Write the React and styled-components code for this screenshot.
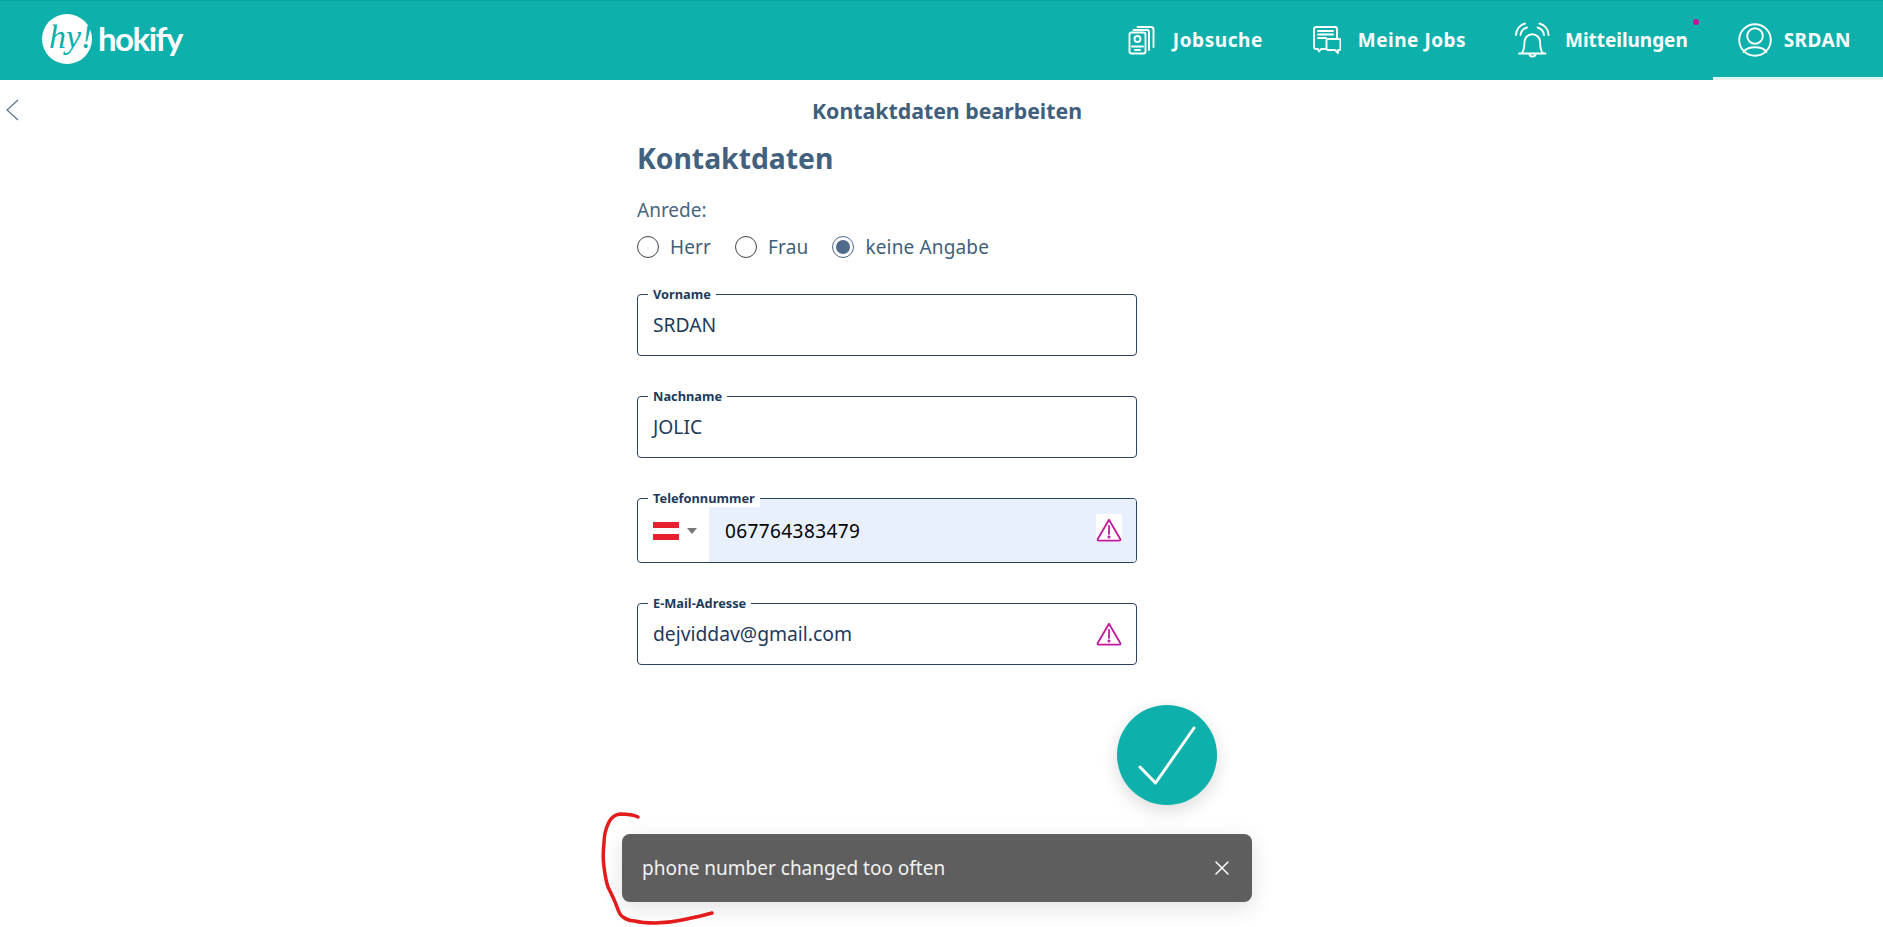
import React from "react";
import styled, { createGlobalStyle } from "styled-components";

const FONT = '"Noto Sans", "Open Sans", sans-serif';

const Global = createGlobalStyle`
  html, body { margin: 0; padding: 0; background: #fff; height: 100%; overflow: hidden; }
  body { font-family: ${FONT}; }
  * { box-sizing: border-box; }
`;

const Page = styled.div`
  position: relative;
  width: 1883px;
  height: 927px;
  overflow: hidden;
  background: #fff;
`;

const Header = styled.header`
  display: flex;
  align-items: stretch;
  justify-content: space-between;
  height: 80px;
  background: #0eb0ac;
  border-top: 1px solid #0ba5a1;
  padding-left: 42px;
`;

const Logo = styled.div`
  display: flex;
  align-items: center;
  gap: 6px;
  padding-bottom: 3px;
`;

const LogoWord = styled.span`
  font-family: Lato, sans-serif;
  font-size: 33px;
  font-weight: 700;
  color: #fff;
  letter-spacing: -1.5px;
  line-height: 1;
  padding-bottom: 2px;
`;

const Nav = styled.nav`
  display: flex;
  align-items: stretch;
`;

const NavItem = styled.a`
  display: flex;
  align-items: center;
  gap: ${(p) => p.$gap || 17}px;
  position: relative;
  padding: 1px ${(p) => (p.$active ? 32 : 25)}px 0 ${(p) => p.$lead ?? 25}px;
  font-size: 19px;
  font-weight: 700;
  color: #fff;
  letter-spacing: ${(p) => p.$track}px;
  white-space: nowrap;
  border-bottom: 3px solid ${(p) => (p.$active ? "#e4f5f4" : "transparent")};
`;

const NavIcon = styled.svg`
  display: block;
  flex: none;
  fill: none;
  stroke: #fff;
  stroke-width: 1.9;
  stroke-linecap: round;
  stroke-linejoin: round;
`;

const NotifyDot = styled.span`
  position: absolute;
  top: 18px;
  right: 14px;
  width: 6px;
  height: 6px;
  border-radius: 50%;
  background: #c2169a;
`;

const SubHeader = styled.div`
  position: relative;
  display: flex;
  justify-content: center;
  padding: 16px 0 0 11px;
  height: 59px;
`;

const BackIcon = styled.svg`
  position: absolute;
  left: 6px;
  top: 19px;
  fill: none;
  stroke: #50708c;
  stroke-width: 1.1;
`;

const SubTitle = styled.h1`
  margin: 0;
  font-size: 21.3px;
  line-height: 30px;
  font-weight: 700;
  color: #3f5f7c;
`;

const Form = styled.form`
  display: flex;
  flex-direction: column;
  width: 500px;
  margin-left: 637px;
`;

const Heading = styled.h2`
  margin: 0;
  font-size: 28.3px;
  line-height: 38px;
  font-weight: 700;
  color: #41617f;
`;

const GroupLabel = styled.div`
  margin-top: 21px;
  font-size: 19px;
  line-height: 24px;
  color: #48657f;
`;

const RadioRow = styled.div`
  display: flex;
  gap: 24px;
  margin-top: 13px;
`;

const RadioOption = styled.label`
  display: flex;
  align-items: center;
  gap: 11px;
  height: 24px;
  font-size: 19px;
  letter-spacing: 0.15px;
  color: #3f5f7c;
`;

const RadioCircle = styled.span`
  display: flex;
  align-items: center;
  justify-content: center;
  width: 22px;
  height: 22px;
  border-radius: 50%;
  border: 1px solid ${(p) => (p.$checked ? "#4f6a8a" : "#444")};
  &::after {
    content: "";
    display: ${(p) => (p.$checked ? "block" : "none")};
    width: 14px;
    height: 14px;
    border-radius: 50%;
    background: #4f6a8a;
  }
`;

const Fields = styled.div`
  display: flex;
  flex-direction: column;
  gap: 32px;
  margin-top: 27px;
`;

const Field = styled.fieldset`
  margin: 0;
  padding: 0 0 ${(p) => (p.$flush ? 0 : 6)}px;
  min-width: 0;
  border: 1px solid #2b4563;
  border-radius: 4px;
`;

const Legend = styled.legend`
  position: relative;
  z-index: 1;
  margin-left: 10px;
  padding: 0 5px;
  font-size: 12.8px;
  line-height: 17px;
  font-weight: 700;
  color: #1d3a5c;
  background: #fff;
`;

const FieldRow = styled.div`
  display: flex;
  align-items: center;
  height: 46px;
  padding: 0 14px 3px 15px;
`;

const Value = styled.div`
  flex: 1;
  font-size: 19.3px;
  color: #1d3a5c;
`;

const PhoneRow = styled.div`
  display: flex;
  align-items: stretch;
  height: 63px;
  margin-top: -8px;
`;

const CountryPicker = styled.div`
  display: flex;
  align-items: center;
  gap: 8px;
  width: 71px;
  padding: 1px 0 0 15px;
`;

const Caret = styled.span`
  width: 0;
  height: 0;
  border-left: 5px solid transparent;
  border-right: 5px solid transparent;
  border-top: 6px solid #777;
`;

const PhoneInput = styled.div`
  flex: 1;
  display: flex;
  align-items: center;
  padding: 1px 14px 0 16px;
  background: #e8f0fd;
  border-radius: 0 3px 3px 0;
`;

const PhoneValue = styled.div`
  flex: 1;
  font-size: 19px;
  letter-spacing: 0.4px;
  color: #000;
`;

const IconBox = styled.span`
  display: flex;
  padding-top: ${(p) => (p.$filled ? 4 : 0)}px;
  margin-top: ${(p) => (p.$filled ? -7 : 0)}px;
  background: ${(p) => (p.$filled ? "#fff" : "transparent")};
`;

const Fab = styled.button`
  position: absolute;
  left: 1117px;
  top: 705px;
  width: 100px;
  height: 100px;
  padding: 0;
  border: 0;
  border-radius: 50%;
  background: #0eb0ac;
  box-shadow: 0 6px 18px rgba(0, 0, 0, 0.14);
`;

const Toast = styled.div`
  position: absolute;
  left: 622px;
  top: 834px;
  width: 630px;
  height: 68px;
  display: flex;
  align-items: center;
  justify-content: space-between;
  padding: 0 22px 0 20px;
  background: #5e5e5e;
  border-radius: 8px;
  box-shadow: 0 6px 22px rgba(0, 0, 0, 0.12);
  color: #f2f2f2;
  font-size: 19px;
`;

const Scribble = styled.svg`
  position: absolute;
  left: 0;
  top: 0;
  pointer-events: none;
`;

const Warning = () => (
  <svg width="26" height="24" viewBox="0 0 26 24" fill="none" stroke="#c4189c" strokeWidth="1.8" strokeLinejoin="round" strokeLinecap="round">
    <path d="M13 1.8 L24.4 21.2 Q24.8 22.6 23.4 22.6 H2.6 Q1.2 22.6 1.6 21.2 Z" />
    <path d="M13 8 V16" />
    <circle cx="13" cy="19" r="0.6" fill="#c4189c" />
  </svg>
);

const Flag = () => (
  <svg width="26" height="18" viewBox="0 0 26 18">
    <rect width="26" height="18" fill="#fff" />
    <rect width="26" height="6" fill="#e9202f" />
    <rect y="12" width="26" height="6" fill="#e9202f" />
  </svg>
);

export default function App() {
  return (
    <Page>
      <Global />
      <Header>
        <Logo>
          <svg width="50" height="50" viewBox="0 0 50 50">
            <circle cx="25" cy="25" r="25" fill="#fff" />
            <text x="7" y="34" fontFamily='"Liberation Serif", serif' fontStyle="italic" fontSize="34" fill="#0eb0ac">hy!</text>
          </svg>
          <LogoWord>hokify</LogoWord>
        </Logo>
        <Nav>
          <NavItem $track={0.55}>
            <NavIcon width="28" height="30" viewBox="0 0 28 30">
              <rect x="1.5" y="7.5" width="16" height="21" rx="2" />
              <path d="M5.5 5 H19 a2 2 0 0 1 2 2 V25" />
              <path d="M9.5 2 H23 a2.5 2.5 0 0 1 2.5 2.5 V22" />
              <circle cx="9.5" cy="14" r="3" />
              <path d="M4 21.5 H15 M7 25 H12" />
            </NavIcon>
            Jobsuche
          </NavItem>
          <NavItem $track={0.5}>
            <NavIcon width="28" height="28" viewBox="0 0 28 28">
              <path d="M12 23 H8 L6 25.5 L5 23 H3 a2 2 0 0 1-2-2 V3 a2 2 0 0 1 2-2 H22 a2 2 0 0 1 2 2 V12" />
              <path d="M5 5 H20 M5 8.5 H20 M5 12 H13" />
              <path d="M15 13 H26 a1.5 1.5 0 0 1 1.5 1.5 V22.5 a1.5 1.5 0 0 1-1.5 1.5 H25 V27 L22 24 H15 a1.5 1.5 0 0 1-1.5-1.5 V14.5 A1.5 1.5 0 0 1 15 13 Z" />
            </NavIcon>
            Meine Jobs
          </NavItem>
          <NavItem $gap={15} $track={-0.05} $lead={23}>
            <NavIcon width="36" height="36" viewBox="0 0 36 36">
              <path d="M8 31 C10 28 10.5 25 10.5 20 a7.8 7.8 0 0 1 15.6 0 C26.1 25 26.6 28 28.6 31" />
              <path d="M5 31.5 H31.5" />
              <path d="M15.5 32 a3 2.5 0 0 0 6 0" />
              <path d="M2 13 A12 12 0 0 1 11 1.5 M6.5 13 A9 9 0 0 1 13 5.5" />
              <path d="M34.6 13 A12 12 0 0 0 25.6 1.5 M30 13 A9 9 0 0 0 23.6 5.5" />
            </NavIcon>
            Mitteilungen
            <NotifyDot />
          </NavItem>
          <NavItem $active $gap={12} $track={0.45}>
            <NavIcon width="34" height="34" viewBox="0 0 34 34">
              <circle cx="17" cy="17" r="15.8" />
              <circle cx="17" cy="13" r="7.8" />
              <path d="M5.5 29 C8 25.5 12 24.3 17 24.3 S26 25.5 28.5 29" />
            </NavIcon>
            SRDAN
          </NavItem>
        </Nav>
      </Header>

      <SubHeader>
        <BackIcon width="13" height="22" viewBox="0 0 13 22">
          <path d="M12 1 L1 11 L12 21" />
        </BackIcon>
        <SubTitle>Kontaktdaten bearbeiten</SubTitle>
      </SubHeader>

      <Form>
        <Heading>Kontaktdaten</Heading>
        <GroupLabel>Anrede:</GroupLabel>
        <RadioRow>
          <RadioOption><RadioCircle />Herr</RadioOption>
          <RadioOption><RadioCircle />Frau</RadioOption>
          <RadioOption><RadioCircle $checked />keine Angabe</RadioOption>
        </RadioRow>
        <Fields>
          <Field>
            <Legend>Vorname</Legend>
            <FieldRow><Value>SRDAN</Value></FieldRow>
          </Field>
          <Field>
            <Legend>Nachname</Legend>
            <FieldRow><Value>JOLIC</Value></FieldRow>
          </Field>
          <Field $flush>
            <Legend>Telefonnummer</Legend>
            <PhoneRow>
              <CountryPicker><Flag /><Caret /></CountryPicker>
              <PhoneInput>
                <PhoneValue>067764383479</PhoneValue>
                <IconBox $filled><Warning /></IconBox>
              </PhoneInput>
            </PhoneRow>
          </Field>
          <Field>
            <Legend>E-Mail-Adresse</Legend>
            <FieldRow>
              <Value>dejviddav@gmail.com</Value>
              <IconBox><Warning /></IconBox>
            </FieldRow>
          </Field>
        </Fields>
      </Form>

      <Fab aria-label="Speichern">
        <svg width="100" height="100" viewBox="0 0 100 100" fill="none" stroke="#fff" strokeWidth="3" strokeLinecap="round" strokeLinejoin="round">
          <path d="M23 62 L38.5 78 L77 23" />
        </svg>
      </Fab>

      <Toast>
        phone number changed too often
        <svg width="16" height="16" viewBox="0 0 16 16" stroke="#fff" strokeWidth="1.5" strokeLinecap="round">
          <path d="M2 2 L14 14 M14 2 L2 14" />
        </svg>
      </Toast>

      <Scribble width="1883" height="927" viewBox="0 0 1883 927" fill="none" stroke="#e31b1b" strokeWidth="3.5" strokeLinecap="round" strokeLinejoin="round">
        <path d="M638 817 C632 814 626 814 620 814 C614 815 611 818 609 822 C605 830 604 836 604 843 C603 852 603 860 604 867 C605 875 606 881 608 887 C612 895 615 901 617 907 C619 913 621 916 623 917 C627 920 631 921 635 921 C642 923 648 923 655 923 C664 923 673 922 682 920 C692 918 702 916 712 913" />
      </Scribble>
    </Page>
  );
}
